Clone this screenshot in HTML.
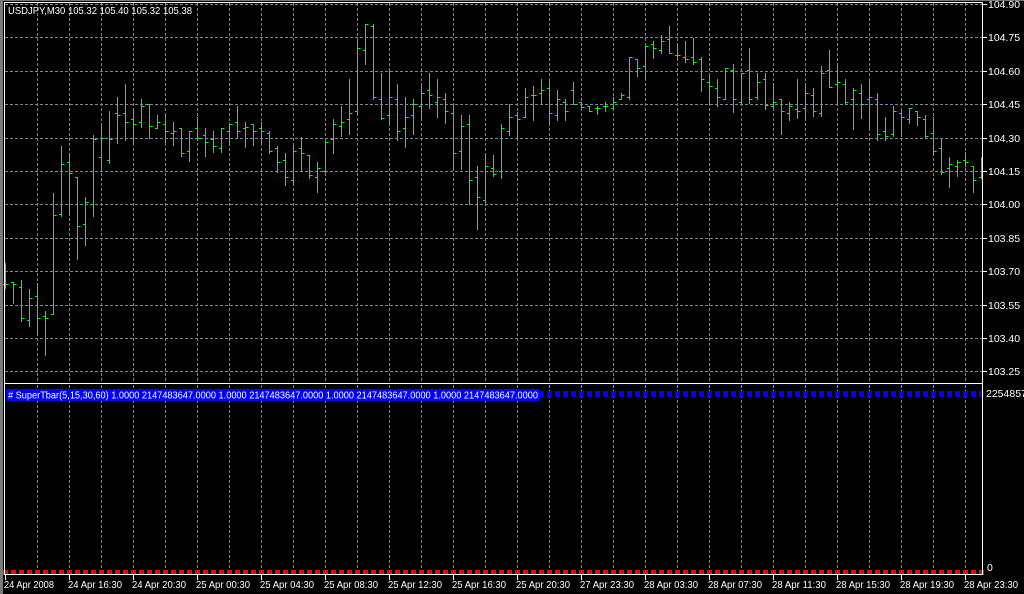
<!DOCTYPE html>
<html><head><meta charset="utf-8"><style>
html,body{margin:0;padding:0;background:#000;width:1024px;height:594px;overflow:hidden}
svg{display:block}
text{font-family:"Liberation Sans",sans-serif;fill:#fff}
</style></head><body>
<svg id="s" width="1024" height="594" xmlns="http://www.w3.org/2000/svg">
<rect width="1024" height="594" fill="#000"/>
<rect x="0" y="0" width="3" height="594" fill="#7a7a7a"/>
<rect x="0" y="0" width="1024" height="1" fill="#7a7a7a"/>
<g id="grid" stroke="#778899" stroke-width="1" stroke-dasharray="3,2" shape-rendering="crispEdges"></g>
<g id="bars" stroke="#00ff00" stroke-width="1" fill="none" shape-rendering="crispEdges"></g>
<g id="sq" shape-rendering="crispEdges"></g>
<rect x="6" y="389" width="534" height="12" fill="#0000ff"/>
<text x="8" y="398.5" font-size="10" textLength="530" lengthAdjust="spacingAndGlyphs"># SuperTbar(5,15,30,60) 1.0000 2147483647.0000 1.0000 2147483647.0000 1.0000 2147483647.0000 1.0000 2147483647.0000</text>
<text x="8" y="14" font-size="10.5" textLength="184" lengthAdjust="spacingAndGlyphs">USDJPY,M30  105.32 105.40 105.32 105.38</text>
<g stroke="#fff" stroke-width="1" shape-rendering="crispEdges">
<line x1="4.5" y1="2" x2="4.5" y2="575"/>
<line x1="4" y1="2.5" x2="983" y2="2.5"/>
<line x1="982.5" y1="2" x2="982.5" y2="575"/>
<line x1="4" y1="383.5" x2="983" y2="383.5"/>
<line x1="4" y1="574.5" x2="983" y2="574.5"/>
</g>
<g id="axis" stroke="#fff" stroke-width="1" shape-rendering="crispEdges"></g>
<g id="lbl" font-size="10.5"></g>
<text x="986" y="397" font-size="10.5">2254857</text>
<text x="987" y="571" font-size="10.5">0</text>
</svg>
<script>
var NS="http://www.w3.org/2000/svg";
function el(p,t,a,txt){var e=document.createElementNS(NS,t);for(var k in a)e.setAttribute(k,a[k]);if(txt)e.textContent=txt;document.getElementById(p).appendChild(e);return e;}
var d="";
for(var x=37;x<=966;x+=32){d+="M"+(x+.5)+" 3V383M"+(x+.5)+" 385V574";}
var prices=["104.90","104.75","104.60","104.45","104.30","104.15","104.00","103.85","103.70","103.55","103.40","103.25"];
for(var k=0;k<12;k++){var y=Math.round(4+k*33.4);d+="M5 "+(y+.5)+"H982";
 el("axis","line",{x1:982,y1:y+.5,x2:987,y2:y+.5});
 el("lbl","text",{x:988,y:y+4},prices[k]);}
el("grid","path",{d:d});
var B=[[263,288,284,284],[282,303,282,284],[280,321,287,318],[289,326,320,298],[284,335,296,318],[311,355,316,318],[193,314,314,215],[146,216,214,164],[153,215,162,173],[177,259,177,226],[197,245,224,202],[135,216,204,139],[126,167,157,138],[111,163,160,139],[97,143,113,115],[84,140,113,122],[110,143,119,124],[99,127,122,106],[104,138,104,126],[115,128,128,122],[115,142,124,131],[122,145,133,131],[128,156,128,153],[131,161,151,131],[117,138,128,138],[128,156,135,142],[131,152,139,146],[128,152,148,128],[123,145,131,124],[106,138,122,131],[122,147,128,127],
[124,145,124,131],[122,143,128,131],[131,153,133,151],[146,172,148,162],[153,185,160,177],[146,185,180,151],[137,171,148,153],[155,178,155,175],[162,192,177,168],[140,172,171,142],[119,153,139,124],[106,136,126,122],[79,134,119,113],[41,113,111,48],[24,64,50,24],[24,99,26,97],[73,119,99,118],[70,124,115,97],[84,140,99,131],[97,147,128,117],[99,134,115,104],[86,120,106,93],[73,108,90,95],[79,117,102,97],[93,123,99,111],[105,169,113,153],[115,169,151,126],[115,204,124,180],[166,229,177,197],[154,202,200,166],
[155,176,168,174],[124,178,171,128],[104,135,131,117],[112,138,115,119],[88,117,117,97],[86,120,95,95],[79,104,93,90],[81,124,88,113],[90,120,115,99],[99,120,102,111],[82,104,90,104],[102,107,102,107],[106,111,106,111],[106,114,108,108],[102,111,106,106],[97,108,108,102],[93,99,99,95],[57,99,97,57],[59,76,59,68],[46,79,66,46],[41,58,44,48],[35,53,50,41],[26,53,39,53],[44,59,55,55],[41,62,57,59],[38,64,57,62],[57,91,59,79],[75,103,82,86],[79,106,88,97],[68,99,99,68],[64,112,70,99],
[73,103,102,73],[48,103,70,99],[73,99,97,82],[73,109,79,105],[84,107,106,102],[99,134,99,111],[102,120,113,106],[79,118,109,111],[86,120,108,93],[88,116,95,111],[66,116,113,73],[50,87,70,87],[63,103,84,82],[79,104,84,102],[88,129,99,90],[84,118,93,104],[81,127,99,97],[93,140,99,134],[117,140,131,136],[106,136,134,111],[110,136,113,117],[108,123,119,108],[111,125,111,117],[115,137,119,136],[117,154,133,151],[139,174,148,172],[157,187,168,164],[160,176,166,162],[152,166,160,162],[166,192,166,180],[157,178,177,157]];
var p="";
for(var i=0;i<B.length;i++){var x=5+8*i,b=B[i];
 p+="M"+(x+.5)+" "+b[0]+"V"+(b[1]+1)+"M"+(x-2)+" "+(b[2]+.5)+"h2.5M"+(x+1)+" "+(b[3]+.5)+"h"+(x+3>982?Math.max(0,981-x):2.5);}
el("bars","path",{d:p});
for(var i=0;i<123;i++){var x=5+8*i-2;
 el("sq","rect",{x:x,y:570,width:5,height:5,fill:"#ff0000"});
 if(x>=536) el("sq","rect",{x:x,y:391,width:5,height:6,fill:"#0000ff"});}
var T=["24 Apr 2008","24 Apr 16:30","24 Apr 20:30","25 Apr 00:30","25 Apr 04:30","25 Apr 08:30","25 Apr 12:30","25 Apr 16:30","25 Apr 20:30","27 Apr 23:30","28 Apr 03:30","28 Apr 07:30","28 Apr 11:30","28 Apr 15:30","28 Apr 19:30","28 Apr 23:30"];
for(var k=0;k<T.length;k++){var x=5+64*k;
 el("axis","line",{x1:x+.5,y1:575,x2:x+.5,y2:580});
 el("lbl","text",{x:x-1,y:588,"font-size":10.5,textLength:k==0?50:54,lengthAdjust:"spacingAndGlyphs"},T[k]);}
</script>
</body></html>
